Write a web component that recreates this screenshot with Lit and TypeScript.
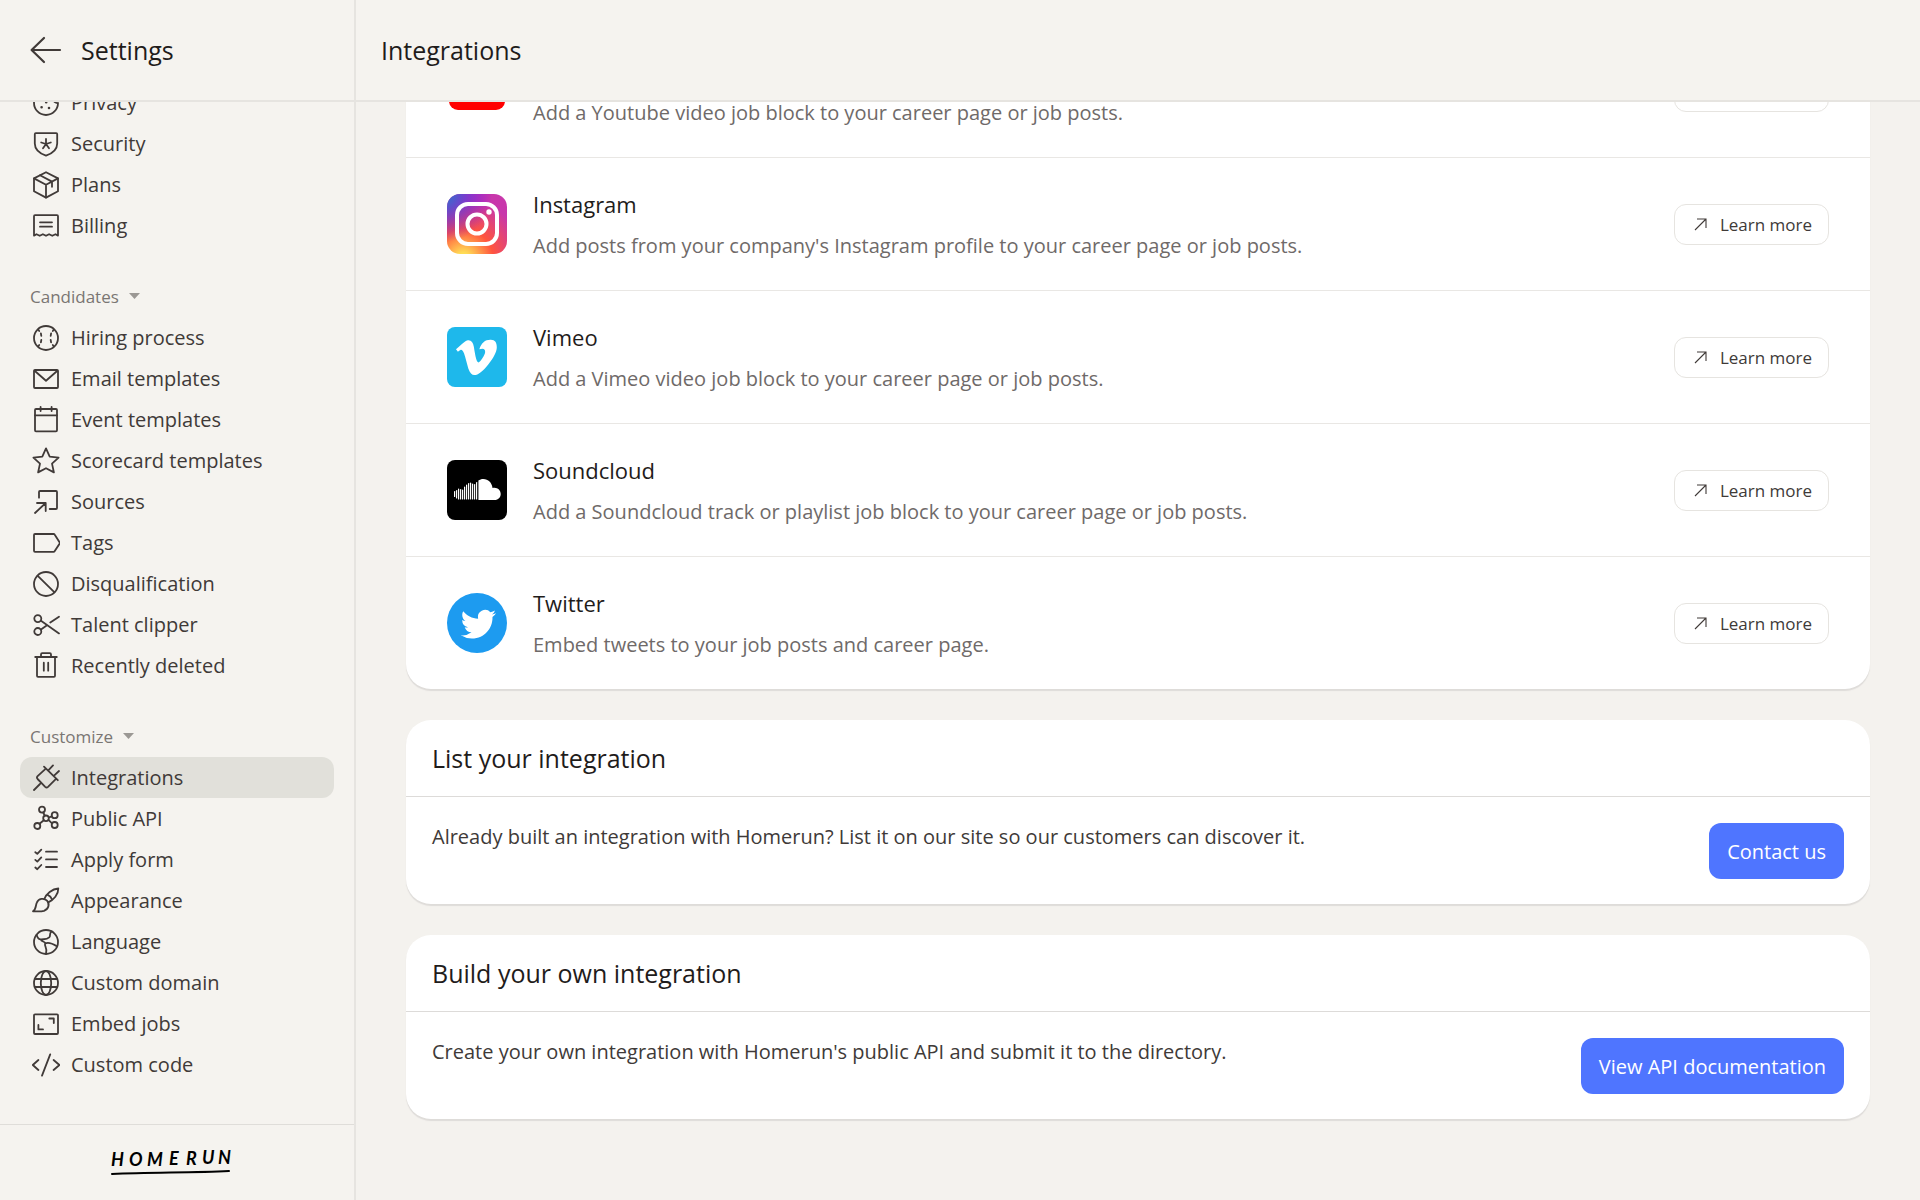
import { LitElement, html, svg, css, TemplateResult } from "lit";
import { customElement } from "lit/decorators.js";
import { classMap } from "lit/directives/class-map.js";

interface NavItem {
  label: string;
  icon: TemplateResult;
  active?: boolean;
}

interface NavGroup {
  label?: string;
  items: NavItem[];
}

interface Integration {
  name: string;
  description: string;
  logo: TemplateResult;
}

interface Callout {
  title: string;
  text: string;
  action: string;
}

const navGroups: NavGroup[] = [
  {
    items: [
      {
        label: "Privacy",
        icon: svg`<path d="M14 2A12 12 0 1 0 26 14C23.600 14.400 21.400 12.600 21.600 10C18.600 10.300 16.600 8.200 17.200 5.600C15.400 5.400 14.200 4 14 2z"/>
          <path class="dots" d="M9.600 18.200h.01M17 19h.01M14.200 13.300h.01M8.500 11h.01"/>`,
      },
      {
        label: "Security",
        icon: svg`<path d="M3.800 3.200h20.400q1 0 1 1v9.300c0 6-5 10-11.200 12.200C7.800 23.500 2.800 19.500 2.800 13.500V4.200q0-1 1-1z"/>
          <path d="M14 14V9M14 14l4.800-1.500M14 14l3 4.200M14 14l-3 4.200M14 14l-4.800-1.500"/>`,
      },
      {
        label: "Plans",
        icon: svg`<path d="M14 1.200l12 6.200v12.800l-12 6.400-12-6.400V7.400z"/><path d="M2 7.400l12 6.400 12-6.400M14 13.800v12.800M8 4.300l12 6.300v5.200"/>`,
      },
      {
        label: "Billing",
        icon: svg`<path d="M2 23.600V4.200q0-1 1-1h22q1 0 1 1v19.400l-2.500-1.400-3.200 1.600-3.200-1.600-3.100 1.600-3.100-1.600-3.200 1.600-3.200-1.600z"/><path d="M8 10.300h12M8 14.700h12"/>`,
      },
    ],
  },
  {
    label: "Candidates",
    items: [
      {
        label: "Hiring process",
        icon: svg`<circle cx="14" cy="14" r="12"/><path d="M6.200 5.600l1 1.400M8.900 9.400l.4 2.400M9.300 16l-.4 2.400M7.200 21l-1 1.400M21.800 5.600l-1 1.400M19.100 9.400l-.4 2.400M18.700 16l.4 2.400M20.800 21l1 1.400"/>`,
      },
      {
        label: "Email templates",
        icon: svg`<rect x="2" y="5" width="24" height="18" rx="1"/><path d="M2.600 5.800L14 15.700 25.400 5.800"/>`,
      },
      {
        label: "Event templates",
        icon: svg`<rect x="3" y="3" width="22" height="22.300" rx="1"/><path d="M3 9.300h22M8.600 1v4M19.600 1v4"/>`,
      },
      {
        label: "Scorecard templates",
        icon: svg`<path d="M14 1.400l3.700 8.200 8.900 1-6.600 6 1.900 8.800L14 21.200l-7.900 4.200L8 16.600l-6.600-6 8.900-1z"/>`,
      },
      {
        label: "Sources",
        icon: svg`<path d="M7 9.700V4q0-1 1-1h16q1 0 1 1v16q0 1-1 1h-6.300M3 25l10.700-10M5 15h8.700v8"/>`,
      },
      {
        label: "Tags",
        icon: svg`<path d="M3 5h18.600q.7 0 1 .5L28 14l-5.400 8.300q-.3.5-1 .5H3q-1 0-1-1V6q0-1 1-1z"/>`,
      },
      {
        label: "Disqualification",
        icon: svg`<circle cx="14" cy="14" r="12"/><path d="M5.500 5.600l17 16.800"/>`,
      },
      {
        label: "Talent clipper",
        icon: svg`<circle cx="5.800" cy="7.600" r="3.500"/><circle cx="5.800" cy="20.500" r="3.500"/><path d="M9 9.800l18 12.600M9 18.400l6-4.200M18.300 11.600L27 5.700"/>`,
      },
      {
        label: "Recently deleted",
        icon: svg`<path d="M3.200 5h21.600M9 4.600V2.400q0-1.200 1.200-1.200h7.600Q19 1.200 19 2.400v2.200M5 5.400v18.400q0 1 1 1h16q1 0 1-1V5.400M11.800 10.700v8M16.200 10.700v8"/>`,
      },
    ],
  },
  {
    label: "Customize",
    items: [
      {
        label: "Integrations",
        active: true,
        icon: svg`<path d="M2 26l6-6M12 2.600l13.800 13.600M13.800 4.600l-8.200 7.600q-1.300 1.400 0 2.800l7.600 7.800q1.400 1.300 2.800 0l8-8M16.800 5.800L21 1.400M22.600 11.200l4.400-4.200"/>`,
      },
      {
        label: "Public API",
        icon: svg`<circle cx="10" cy="4.600" r="3"/><circle cx="22.700" cy="10.200" r="3"/><circle cx="22.700" cy="20" r="3"/><circle cx="5.300" cy="21" r="3"/><circle cx="14" cy="13.300" r="2.800"/>
          <path d="M11.200 7.500l1.500 3M16.800 12.500l3-1.200M16.500 14.800l3.500 3.500M11.800 15.200l-4.300 3.600"/>`,
      },
      {
        label: "Apply form",
        icon: svg`<path d="M14 5.700h11M14 13.400h11M14 21h11M3.300 6.200l2 1.700 4-4.200M3.300 13.900l2 1.700 4-4.200M3.300 21.500l2 1.700 4-4.200"/>`,
      },
      {
        label: "Appearance",
        icon: svg`<path d="M1 24.300C4.200 22.500 3.400 19 4.800 15.600 6.400 11.400 12 10.600 15 13.600c3 3.200 1.800 8.400-3 10.200-2.600.8-7 .5-11 .5z"/><path d="M12.400 11.800C14.200 7 20 1.800 26.300 1.500 26.500 7.400 21.600 13 16.300 15.300M15.400 7.600c2 .9 3.800 2.700 4.500 4.700"/>`,
      },
      {
        label: "Language",
        icon: svg`<circle cx="14" cy="14" r="12"/><path d="M4.600 6.800C5.400 9.800 7 11.800 9.400 11.400c2.200-.5 5 .6 7.800-2 1.900-2-.6-3.200 2.400-6M8.800 11.400c.6 2.800 3.800 1.400 4.400 4-1.400 3 2.800 4.200.8 10.400M13.200 15.600c3.200-2 8 .4 12 2.800"/>`,
      },
      {
        label: "Custom domain",
        icon: svg`<circle cx="14" cy="14" r="12"/><ellipse cx="14" cy="14" rx="5.200" ry="12"/><path d="M2.700 10h22.600M2.700 18h22.600"/>`,
      },
      {
        label: "Embed jobs",
        icon: svg`<rect x="2" y="4.300" width="24" height="19.700" rx="1"/><path d="M6.400 15v4.400H11M17.300 8.500h4.500V13"/>`,
      },
      {
        label: "Custom code",
        icon: svg`<path d="M6.400 9L.8 14l5.600 5M21.600 9l5.800 5-5.800 5M18.200 3.400L10 24.600"/>`,
      },
    ],
  },
];

// Left x, top y and bottom y of each bar in the Soundcloud wave.
const waveBars: [number, number, number][] = [
  [7, 31, 37], [9, 30, 38.500], [11, 28.500, 39.500], [13, 29, 39.600], [15, 29.500, 39.600], [17, 26.500, 39.600],
  [19, 24.500, 39.600], [21, 23, 39.600], [23, 22.500, 39.600], [25, 23.500, 39.600], [27, 24, 39.600], [29, 22, 39.600],
];

const integrations: Integration[] = [
  {
    name: "YouTube",
    description: "Add a Youtube video job block to your career page or job posts.",
    logo: svg`<rect x="2" y="9" width="56" height="40" rx="9" fill="#f00"/><path d="M24.500 20.500v17L39 29z" fill="#fff"/>`,
  },
  {
    name: "Instagram",
    description: "Add posts from your company's Instagram profile to your career page or job posts.",
    logo: svg`<defs>
        <radialGradient id="warm" cx="0.270" cy="1.080" r="1">
          <stop offset="0" stop-color="#fd5"/><stop offset="0.100" stop-color="#fd5"/>
          <stop offset="0.500" stop-color="#ff543e"/><stop offset="1" stop-color="#c837ab"/>
        </radialGradient>
        <radialGradient id="cool" cx="-0.050" cy="0" r="0.800">
          <stop offset="0" stop-color="#3771c8"/><stop offset="0.200" stop-color="#4a5fcc"/>
          <stop offset="1" stop-color="#6600ff" stop-opacity="0"/>
        </radialGradient>
      </defs>
      <rect width="60" height="60" rx="13" fill="url(#warm)"/><rect width="60" height="60" rx="13" fill="url(#cool)"/>
      <rect x="10" y="10" width="40" height="40" rx="11" fill="none" stroke="#fff" stroke-width="4"/>
      <circle cx="30" cy="30" r="9.500" fill="none" stroke="#fff" stroke-width="4"/><circle cx="42" cy="18" r="2.700" fill="#fff"/>`,
  },
  {
    name: "Vimeo",
    description: "Add a Vimeo video job block to your career page or job posts.",
    logo: svg`<rect width="60" height="60" rx="8" fill="#1eb8eb"/>
      <path transform="translate(9 10) scale(1.700)" fill="#fff" d="M23.9765 6.4168c-.105 2.338-1.739 5.5429-4.894 9.6088-3.2679 4.247-6.0258 6.3699-8.2898 6.3699-1.409 0-2.578-1.294-3.553-3.881l-1.9179-7.1138c-.719-2.584-1.488-3.878-2.312-3.878-.179 0-.806.378-1.8809 1.132l-1.129-1.457a315.06 315.06 0 003.501-3.1279c1.579-1.368 2.765-2.085 3.5539-2.159 1.867-.18 3.016 1.1 3.447 3.838.465 2.953.789 4.789.971 5.5069.5389 2.45 1.1309 3.674 1.7759 3.674.502 0 1.256-.796 2.265-2.385 1.004-1.589 1.54-2.797 1.612-3.628.144-1.371-.395-2.061-1.614-2.061-.574 0-1.167.121-1.777.391 1.186-3.8679 3.434-5.7568 6.7619-5.6368 2.4729.06 3.6279 1.664 3.4929 4.7969z"/>`,
  },
  {
    name: "Soundcloud",
    description: "Add a Soundcloud track or playlist job block to your career page or job posts.",
    logo: svg`<rect width="60" height="60" rx="8" fill="#000"/>
      ${waveBars.map(([x, top, bottom]) => svg`<rect x=${x} y=${top} width="1.200" height=${bottom - top} rx="0.600" fill="#fff"/>`)}
      <path fill="#fff" d="M31.400 20.600C32.700 19.600 34.500 19 36.300 19c4.900 0 8.700 3.800 9.200 9 4.500-1.200 8.200 2 8.200 6 0 3.500-2.700 6-5.900 6H31.400z"/>`,
  },
  {
    name: "Twitter",
    description: "Embed tweets to your job posts and career page.",
    logo: svg`<circle cx="30" cy="30" r="30" fill="#1d9bf0"/>
      <path transform="translate(13.800 13.600) scale(1.470)" fill="#fff" d="M23.953 4.570a10 10 0 01-2.825.775 4.958 4.958 0 002.163-2.723c-.951.555-2.005.959-3.127 1.184a4.920 4.920 0 00-8.384 4.482C7.690 8.095 4.067 6.130 1.640 3.162a4.822 4.822 0 00-.666 2.475c0 1.710.870 3.213 2.188 4.096a4.904 4.904 0 01-2.228-.616v.060a4.923 4.923 0 003.946 4.827 4.996 4.996 0 01-2.212.085 4.936 4.936 0 004.604 3.417 9.867 9.867 0 01-6.102 2.105c-.390 0-.779-.023-1.170-.067a13.995 13.995 0 007.557 2.209c9.053 0 13.998-7.496 13.998-13.985 0-.210 0-.420-.015-.630A9.935 9.935 0 0024 4.590z"/>`,
  },
];

const callouts: Callout[] = [
  {
    title: "List your integration",
    text: "Already built an integration with Homerun? List it on our site so our customers can discover it.",
    action: "Contact us",
  },
  {
    title: "Build your own integration",
    text: "Create your own integration with Homerun's public API and submit it to the directory.",
    action: "View API documentation",
  },
];

@customElement("settings-sidebar")
class SettingsSidebar extends LitElement {
  static styles = css`
    :host {
      display: flex;
      flex-direction: column;
      min-height: 0;
      box-sizing: border-box;
      border-right: 2px solid #e6e4e0;
      background: #f5f3ef;
      color: #403a38;
    }
    .header {
      display: flex;
      align-items: center;
      gap: 19px;
      height: 100px;
      flex: none;
      padding: 0 30px;
      border-bottom: 2px solid #e6e4e0;
    }
    .back {
      display: flex;
      padding: 0;
      border: 0;
      background: none;
      color: inherit;
    }
    .back svg {
      width: 32px;
      height: 32px;
      stroke-width: 2.2;
    }
    h1 {
      margin: 0;
      font-size: 25px;
      font-weight: 400;
      color: #1f1c1b;
    }
    svg {
      fill: none;
      stroke: currentColor;
      stroke-width: 1.8;
      stroke-linecap: round;
      stroke-linejoin: round;
    }
    .dots {
      stroke-width: 2.6;
    }
    nav {
      flex: 1;
      min-height: 0;
      overflow-y: auto;
      scrollbar-width: none;
      padding: 0 20px 60px;
      box-sizing: border-box;
    }
    ul {
      margin: 0;
      padding: 0;
      list-style: none;
    }
    .toggle {
      display: flex;
      align-items: center;
      gap: 10px;
      height: 42px;
      margin-top: 29px;
      padding: 0 10px;
      border: 0;
      background: none;
      font: inherit;
      font-size: 17px;
      color: #7a7673;
    }
    .caret {
      width: 11px;
      height: 6px;
      fill: #9b9894;
      stroke: none;
    }
    .item {
      display: flex;
      align-items: center;
      gap: 11px;
      height: 41px;
      padding: 0 12px;
      border-radius: 12px;
      color: inherit;
      text-decoration: none;
      font-size: 20px;
    }
    .item svg {
      width: 28px;
      height: 28px;
      flex: none;
    }
    .active {
      background: #e1e0da;
    }
    footer {
      display: flex;
      justify-content: center;
      align-items: center;
      height: 75px;
      flex: none;
      padding-right: 10px;
      border-top: 1px solid #dfddd9;
    }
    .wordmark {
      width: 124px;
      height: 32px;
      overflow: visible;
      color: #000;
    }
    .wordmark text {
      fill: currentColor;
      stroke: none;
      font: italic 700 18px Lato, sans-serif;
    }
    .wordmark path {
      stroke-width: 2;
    }
  `;

  firstUpdated() {
    this.renderRoot.querySelector("nav")!.scrollTop = 20;
  }

  render() {
    return html`
      <header class="header">
        <button class="back" type="button" aria-label="Back">
          <svg viewBox="0 0 32 32"><path d="M30 16H2M14 4L1.600 16 14 28" /></svg>
        </button>
        <h1>Settings</h1>
      </header>
      <nav>
        ${navGroups.map(
          (group) => html`
            ${group.label
              ? html`<button class="toggle" type="button" aria-expanded="true">
                  ${group.label}
                  <svg class="caret" viewBox="0 0 11 6"><path d="M0 0h11L5.500 6z" /></svg>
                </button>`
              : null}
            <ul>
              ${group.items.map(
                (item) => html`<li>
                  <a class=${classMap({ item: true, active: !!item.active })} href="#">
                    <svg viewBox="0 0 28 28" aria-hidden="true">${item.icon}</svg>${item.label}
                  </a>
                </li>`
              )}
            </ul>
          `
        )}
      </nav>
      <footer>
        <svg class="wordmark" viewBox="0 0 124 32" role="img" aria-label="Homerun">
          <text x="1 19 37 59 76 92 108" y="19 19 19 18 18 17 17">HOMERUN</text>
          <path d="M2 27C40 25 80 26 119 24" />
        </svg>
      </footer>
    `;
  }
}

@customElement("integrations-page")
class IntegrationsPage extends LitElement {
  static styles = css`
    :host {
      display: flex;
      flex-direction: column;
      min-width: 0;
      min-height: 0;
      background: #f4f2ee;
      color: #403a38;
    }
    .header {
      display: flex;
      align-items: center;
      height: 100px;
      flex: none;
      padding: 0 25px;
      border-bottom: 2px solid #e6e4e0;
      background: #f5f3ef;
    }
    h1,
    h2 {
      margin: 0;
      font-size: 25px;
      font-weight: 400;
      color: #1f1c1b;
    }
    h3,
    p {
      margin: 0;
      font-weight: 400;
    }
    .content {
      flex: 1;
      min-height: 0;
      overflow-y: auto;
      scrollbar-width: none;
      display: flex;
      flex-direction: column;
      gap: 31px;
      padding: 0 50px 96px;
    }
    .card {
      flex: none;
      border-radius: 25px;
      background: #fff;
      box-shadow: 0 2px 1px #dedcd9;
    }
    .row {
      display: flex;
      align-items: center;
      gap: 26px;
      min-height: 132px;
      padding: 0 41px;
      border-bottom: 1px solid #e9e7e4;
    }
    .row:last-child {
      border-bottom: 0;
    }
    .logo {
      width: 60px;
      height: 60px;
      flex: none;
    }
    .text {
      flex: 1;
      display: flex;
      flex-direction: column;
      gap: 13px;
    }
    h3 {
      font-size: 22px;
      line-height: 30px;
      color: #1f1c1b;
    }
    .description {
      font-size: 20px;
      line-height: 28px;
      color: #6f6a69;
    }
    .learn {
      display: flex;
      align-items: center;
      gap: 13px;
      height: 39px;
      padding: 0 16px 0 19px;
      border: 1px solid #e6e4e0;
      border-radius: 12px;
      color: inherit;
      text-decoration: none;
      font-size: 17px;
    }
    .learn svg {
      width: 13px;
      height: 13px;
      fill: none;
      stroke: currentColor;
      stroke-width: 1.1;
    }
    .card-header {
      display: flex;
      align-items: center;
      min-height: 76px;
      padding: 0 26px;
      border-bottom: 1px solid #dddbd9;
    }
    .card-body {
      display: flex;
      justify-content: space-between;
      align-items: flex-start;
      gap: 26px;
      padding: 26px 26px 25px;
    }
    .card-body p {
      font-size: 20px;
      line-height: 28px;
    }
    .primary {
      height: 56px;
      padding: 0 18px;
      border: 0;
      border-radius: 12px;
      background: #4f75ff;
      color: #fff;
      font: inherit;
      font-size: 20px;
    }
  `;

  firstUpdated() {
    this.renderRoot.querySelector(".content")!.scrollTop = 77;
  }

  render() {
    return html`
      <header class="header"><h1>Integrations</h1></header>
      <div class="content">
        <section class="card">
          ${integrations.map(
            (item) => html`<article class="row">
              <svg class="logo" viewBox="0 0 60 60" aria-hidden="true">${item.logo}</svg>
              <div class="text">
                <h3>${item.name}</h3>
                <p class="description">${item.description}</p>
              </div>
              <a class="learn" href="#">
                <svg viewBox="0 0 13 13" aria-hidden="true"><path d="M1 12L12 1M3 1h9v9" /></svg>
                Learn more
              </a>
            </article>`
          )}
        </section>
        ${callouts.map(
          (item) => html`<section class="card">
            <div class="card-header"><h2>${item.title}</h2></div>
            <div class="card-body">
              <p>${item.text}</p>
              <button class="primary" type="button">${item.action}</button>
            </div>
          </section>`
        )}
      </div>
    `;
  }
}

@customElement("app-root")
class AppRoot extends LitElement {
  static styles = css`
    :host {
      display: grid;
      grid-template-columns: 356px minmax(0, 1fr);
      grid-template-rows: minmax(0, 1fr);
      height: 100vh;
      font-family: "Open Sans", "Noto Sans", sans-serif;
    }
  `;

  render() {
    return html`
      <settings-sidebar></settings-sidebar>
      <integrations-page></integrations-page>
    `;
  }
}
